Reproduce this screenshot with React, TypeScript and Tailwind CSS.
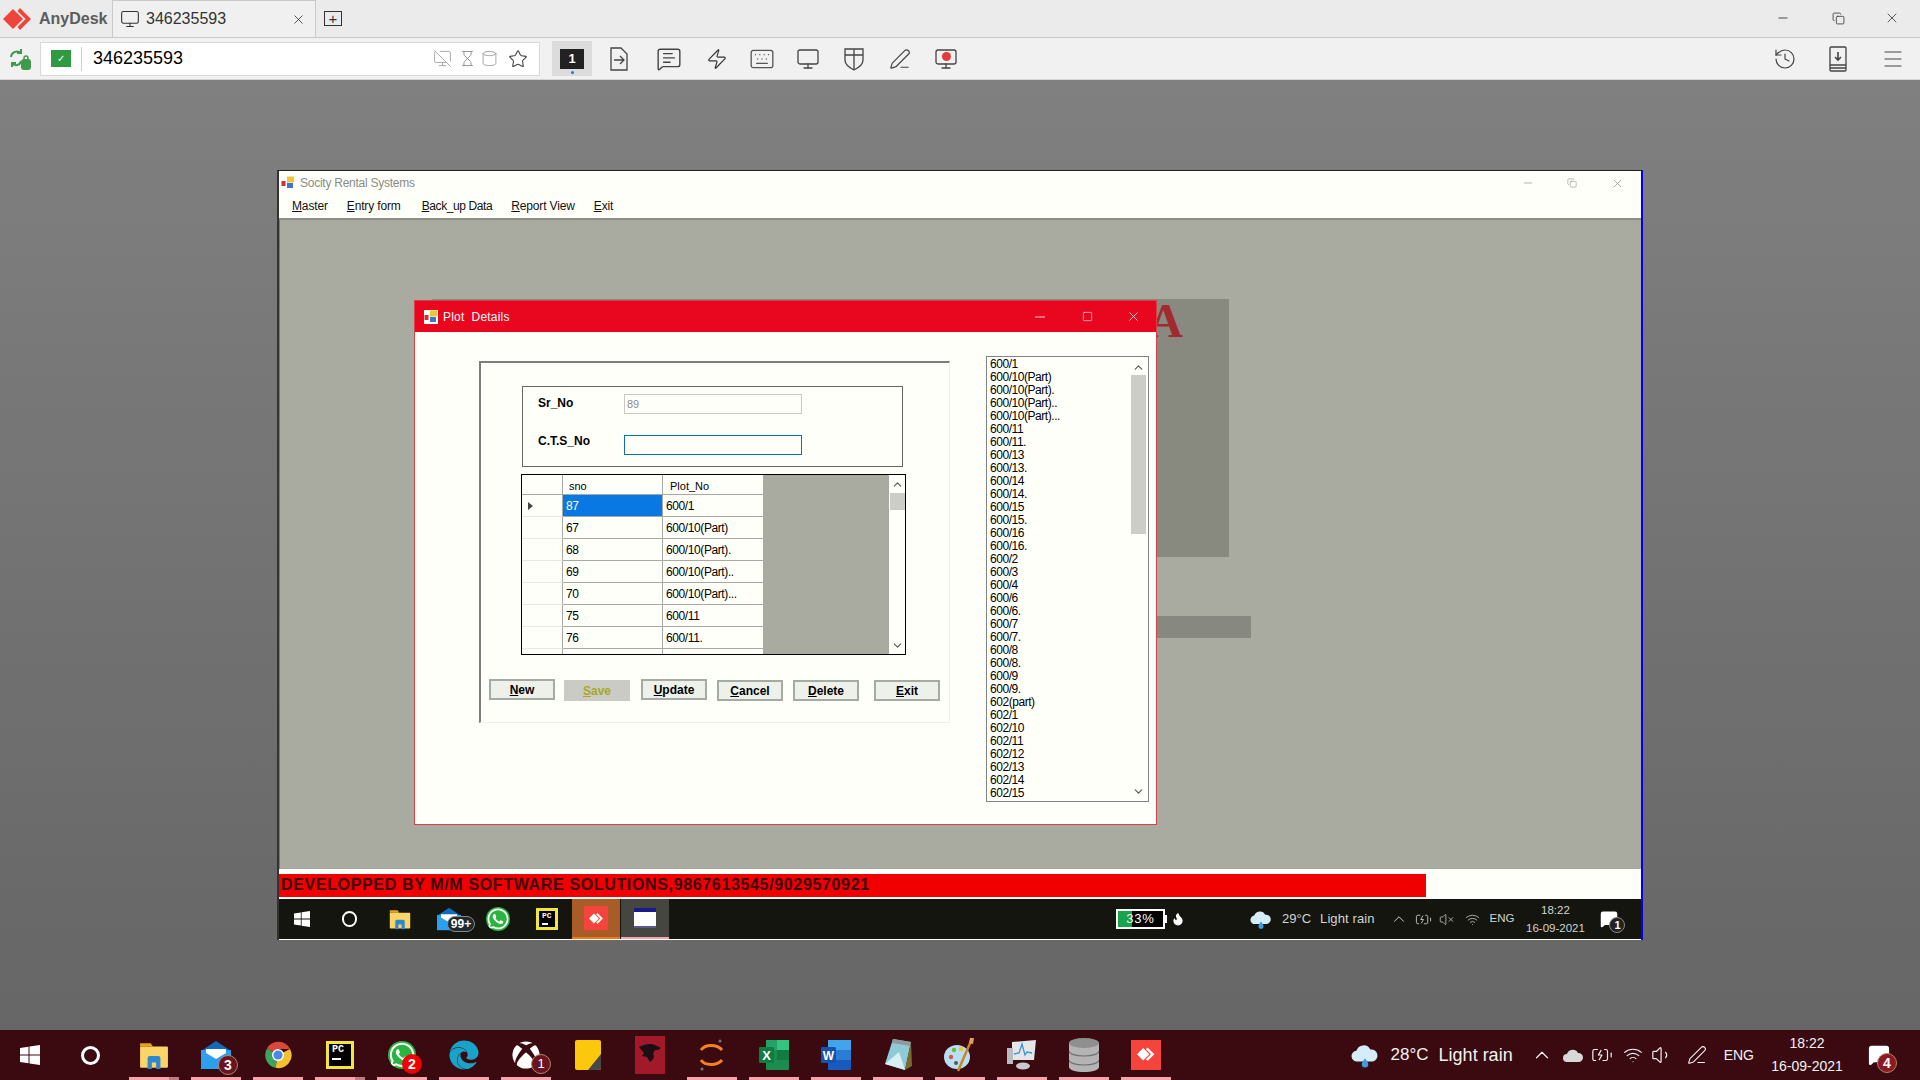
import { ReactNode } from 'react';
import {
  ChevronDown,
  ChevronUp,
  Copy,
  Cylinder,
  History,
  Hourglass,
  Keyboard,
  Menu,
  MessageSquareText,
  Minus,
  Monitor,
  MonitorOff,
  PenLine,
  Square,
  Star,
  VolumeX,
  Volume1,
  Wifi,
  BatteryCharging,
  Flame,
  X,
  Zap,
} from 'lucide-react';
import { FaEdge, FaWhatsapp, FaXbox } from 'react-icons/fa';

const rows = [
  ['87', '600/1'],
  ['67', '600/10(Part)'],
  ['68', '600/10(Part).'],
  ['69', '600/10(Part)..'],
  ['70', '600/10(Part)...'],
  ['75', '600/11'],
  ['76', '600/11.'],
];

const listItems = [
  '600/1', '600/10(Part)', '600/10(Part).', '600/10(Part)..', '600/10(Part)...', '600/11', '600/11.',
  '600/13', '600/13.', '600/14', '600/14.', '600/15', '600/15.', '600/16', '600/16.', '600/2', '600/3',
  '600/4', '600/6', '600/6.', '600/7', '600/7.', '600/8', '600/8.', '600/9', '600/9.', '602(part)',
  '602/1', '602/10', '602/11', '602/12', '602/13', '602/14', '602/15',
];

function AnyDeskMark({ size = 30, color = '#ef443b' }: { size?: number; color?: string }) {
  return (
    <svg width={size} height={size} viewBox="0 0 30 30">
      <path d="M10 5 20 15 10 25 0 15Z" fill={color} />
      <path d="M17 4 28 15 17 26 14.500 23 22.500 15 14.500 7Z" fill={color} />
    </svg>
  );
}

function AnyDeskTile({ size }: { size: number }) {
  return (
    <div className="flex items-center justify-center bg-[#f4443b]" style={{ width: size, height: size }}>
      <AnyDeskMark size={size * 0.62} color="#ffffff" />
    </div>
  );
}

function WinLogo({ size }: { size: number }) {
  return (
    <svg width={size} height={size} viewBox="0 0 20 20" fill="#ffffff">
      <path d="M0 3 8.500 1.800V9.500H0ZM9.500 1.600 20 0V9.500H9.500ZM0 10.500H8.500V18.200L0 17ZM9.500 10.500H20V20L9.500 18.400Z" />
    </svg>
  );
}

function FolderIcon({ size }: { size: number }) {
  return (
    <svg width={size} height={size} viewBox="0 0 28 28">
      <path d="M1 3h10l2 3H1Z" fill="#e8a317" />
      <rect x="1" y="6" width="26" height="20" rx="1" fill="#fbd467" />
      <path d="M8 27V17a2 2 0 0 1 2-2h8a2 2 0 0 1 2 2v10h-4v-6h-4v6Z" fill="#2f87d0" />
    </svg>
  );
}

function MailIcon({ size }: { size: number }) {
  return (
    <svg width={size} height={size} viewBox="0 0 30 30">
      <path d="M15 1 30 11H0Z" fill="#0f6cbd" />
      <rect x="0" y="10" width="30" height="19" fill="#2aa0ee" />
      <path d="M5 9h20v4l-10 6-10-6Z" fill="#ffffff" />
    </svg>
  );
}

function ChromeIcon({ size }: { size: number }) {
  return (
    <svg width={size} height={size} viewBox="0 0 28 28">
      <path d="M14 14 3 7.500A13 13 0 0 1 26 8H14Z" fill="#d9483b" />
      <path d="M14 14 3 7.500A13 13 0 0 0 11.500 26.800Z" fill="#3ba55c" />
      <path d="M14 14 26 8A13 13 0 0 1 11.500 26.800Z" fill="#f2c12e" />
      <circle cx="14" cy="14" r="6" fill="#ffffff" />
      <circle cx="14" cy="14" r="4.600" fill="#4f86ec" />
    </svg>
  );
}

function PyCharmIcon({ size }: { size: number }) {
  return (
    <div className="flex flex-col bg-black border-[3px] border-[#f0e63c] pl-[3px] pt-[1px] leading-none text-white font-bold font-['Liberation_Mono',monospace]" style={{ width: size, height: size, fontSize: size * 0.36 }}>
      <span>PC</span>
      <span className="mt-[3px] h-[2px] w-[45%] bg-white" />
    </div>
  );
}

function ExcelIcon() {
  return (
    <svg width="30" height="32" viewBox="0 0 30 32">
      <rect x="7" y="1" width="23" height="30" rx="1" fill="#1d8a50" />
      <rect x="18" y="1" width="12" height="10" fill="#33c481" />
      <rect x="7" y="1" width="11" height="10" fill="#21a366" />
      <rect x="18" y="11" width="12" height="10" fill="#107c41" />
      <rect x="0" y="8" width="15" height="16" rx="1" fill="#107c41" />
      <text x="7.500" y="20.500" fontSize="13" fontWeight="700" fill="#ffffff" textAnchor="middle" fontFamily="Liberation Sans">X</text>
    </svg>
  );
}

function WordIcon() {
  return (
    <svg width="30" height="32" viewBox="0 0 30 32">
      <rect x="7" y="1" width="23" height="30" rx="1" fill="#185abd" />
      <rect x="7" y="1" width="23" height="10" fill="#41a5ee" />
      <rect x="7" y="11" width="23" height="10" fill="#2b7cd3" />
      <rect x="0" y="8" width="15" height="16" rx="1" fill="#1552ad" />
      <text x="7.500" y="20.500" fontSize="12" fontWeight="700" fill="#ffffff" textAnchor="middle" fontFamily="Liberation Sans">W</text>
    </svg>
  );
}

function StickyIcon() {
  return (
    <svg width="28" height="32" viewBox="0 0 26 32">
      <rect x="0" y="1" width="26" height="30" rx="2" fill="#fdc80b" />
      <path d="M26 15V29a2 2 0 0 1-2 2H13Z" fill="#48484a" />
    </svg>
  );
}

function DragonIcon() {
  return (
    <svg width="30" height="38" viewBox="0 0 30 38">
      <rect width="30" height="38" fill="#a3192c" />
      <path d="M4 11c6-3 12-4 16-2l6 3-3 2-3 0-2 4c2 3 0 6-3 8l-3-5-5-1 2-3-5-6Z" fill="#1b0f14" />
    </svg>
  );
}

function EclipseIcon() {
  return (
    <svg width="26" height="34" viewBox="0 0 26 34" fill="none">
      <path d="M2 12C6 6 18 6 23 12" stroke="#f58220" strokeWidth="3" />
      <path d="M2 22C6 28 18 28 23 22" stroke="#f58220" strokeWidth="3" />
      <circle cx="21" cy="3" r="1.500" fill="#777" />
      <circle cx="3" cy="31" r="1.500" fill="#777" />
    </svg>
  );
}

function NotepadIcon() {
  return (
    <svg width="30" height="34" viewBox="0 0 30 34">
      <path d="M10 1 28 4 22 32 2 26Z" fill="#8ecbd8" />
      <path d="M10 1 28 4 27 8 9 5Z" fill="#8d9aa0" />
      <path d="M16 14 22 32 2 26Z" fill="#d8eef2" />
      <path d="M28 4 29 28 22 32Z" fill="#7a6a2c" />
    </svg>
  );
}

function PaintIcon() {
  return (
    <svg width="32" height="36" viewBox="0 0 32 36">
      <ellipse cx="13" cy="20" rx="13" ry="12" fill="#b8dff2" />
      <circle cx="7" cy="20" r="2.200" fill="#d9534f" />
      <circle cx="10" cy="13" r="2.200" fill="#6cbb3c" />
      <circle cx="17" cy="12" r="2.200" fill="#f2c12e" />
      <circle cx="12" cy="26" r="2" fill="#555" />
      <path d="M27 4 14 34" stroke="#c98528" strokeWidth="2.500" />
      <path d="M26 1h4l-1 6-4-1Z" fill="#d9a55a" />
    </svg>
  );
}

function PerfIcon() {
  return (
    <svg width="30" height="32" viewBox="0 0 30 32">
      <path d="M5 3 29 1 27 21 5 21Z" fill="#e4e6e8" />
      <path d="M7 15l5-1 3-9 3 11 2-3 5 1" fill="none" stroke="#3f93d2" strokeWidth="1.300" />
      <rect x="0" y="9" width="6" height="16" fill="#b9bcbf" />
      <ellipse cx="16" cy="27" rx="7" ry="3.500" fill="#c8cacc" />
    </svg>
  );
}

function DatabaseIcon() {
  return (
    <svg width="30" height="34" viewBox="0 0 30 34">
      <path d="M0 5v24c0 3 7 5 15 5s15-2 15-5V5Z" fill="#b4b4b4" />
      <ellipse cx="15" cy="5" rx="15" ry="5" fill="#8f8f8f" />
      <path d="M0 13c0 3 7 5 15 5s15-2 15-5" fill="none" stroke="#6f6f6f" strokeWidth="1.200" />
      <path d="M0 22c0 3 7 5 15 5s15-2 15-5" fill="none" stroke="#6f6f6f" strokeWidth="1.200" />
    </svg>
  );
}

function CloudRain({ size }: { size: number }) {
  return (
    <svg width={size} height={size} viewBox="0 0 26 26">
      <path d="M6 19a5 5 0 0 1-1-10 7 7 0 0 1 13-1 5.500 5.500 0 0 1 2 11Z" fill="#d5ecf9" />
      <path d="M13 16c2 3 3 4 3 5.500a3 3 0 0 1-6 0c0-1.500 1-2.500 3-5.500Z" fill="#3f9be0" />
    </svg>
  );
}

// toolbar glyphs that lucide has no close match for
function SyncLockIcon() {
  return (
    <svg width="22" height="24" viewBox="0 0 22 24" fill="none" stroke="#3f9b4c" strokeWidth="2">
      <path d="M2 10a6 6 0 0 1 10-4" />
      <path d="M12 2v4H8" />
      <path d="M12 14a5 5 0 0 1-9 2" />
      <path d="M3 20v-4h4" />
      <rect x="13" y="13" width="8" height="9" rx="2" fill="#3f9b4c" />
      <path d="M15 13v-2a2 2 0 0 1 4 0v2" strokeWidth="1.500" />
    </svg>
  );
}

function SessionArrowIcon() {
  return (
    <svg width="20" height="24" viewBox="0 0 20 24" fill="none" stroke="#444" strokeWidth="1.300">
      <path d="M2 1h10l6 6v16H2Z" />
      <path d="M5 13h10M11 9l4 4-4 4" />
    </svg>
  );
}

function ShieldCrossIcon() {
  return (
    <svg width="20" height="24" viewBox="0 0 20 24" fill="none" stroke="#444" strokeWidth="1.300">
      <path d="M1 2h18v11c0 4-5 8-9 10-4-2-9-6-9-10Z" />
      <path d="M1 8h18M10 2v21" />
    </svg>
  );
}

function SaveToIcon() {
  return (
    <svg width="20" height="26" viewBox="0 0 20 26" fill="none" stroke="#444" strokeWidth="1.300">
      <rect x="2" y="1" width="16" height="24" rx="1" />
      <path d="M2 19h16M2 22h16" />
      <path d="M10 6v8M7 11l3 3 3-3" strokeWidth="1.600" />
    </svg>
  );
}

function Badge({ children, className }: { children: ReactNode; className: string }) {
  return (
    <span className={`absolute flex items-center justify-center rounded-full text-white font-['Liberation_Sans',sans-serif] ${className}`}>
      {children}
    </span>
  );
}

function BottomSlot({ children, underline = true, stacked = false }: { children: ReactNode; underline?: boolean; stacked?: boolean }) {
  return (
    <div className="relative flex h-full w-[50px] items-center justify-center pb-[1px]">
      {children}
      {underline && <span className="absolute bottom-0 left-0 right-0 h-[3px] bg-[#f8a3ab]" />}
      {stacked && <span className="absolute bottom-0 right-0 h-[3px] w-[10px] bg-[#c27a82]" />}
    </div>
  );
}

function DialogButton({ label, className = '', off = false }: { label: string; className?: string; off?: boolean }) {
  return (
    <button className={`h-[21px] w-[66px] border-2 text-[12px] font-bold leading-none ${off ? 'border-[#c9cbc4] bg-[#c9cbc4] text-[#a8a820]' : 'border-[#a6aaa4] bg-[#eef0ea] text-black'} ${className}`}>
      <u>{label[0]}</u>
      {label.slice(1)}
    </button>
  );
}

function TopBar() {
  return (
    <div className="flex h-[38px] border-b border-[#c9c9c9] bg-[#ebebeb]">
      <div className="flex w-[112px] items-center pl-[3px]">
        <AnyDeskMark size={30} />
        <span className="ml-[6px] text-[16px] font-bold text-[#5c5c5c]">AnyDesk</span>
      </div>
      <div className="flex h-[37px] w-[204px] items-center self-end border-x border-t border-[#c9c9c9] bg-[#f0f0f0] pl-[7px]">
        <Monitor size={20} strokeWidth={1.300} className="text-[#333]" />
        <span className="ml-[6px] text-[16px] text-[#333]">346235593</span>
        <X size={15} strokeWidth={1.200} className="ml-[65px] text-[#222]" />
      </div>
      <div className="ml-[8px] flex h-full items-center">
        <div className="relative flex h-[15px] w-[18px] items-center justify-center border border-[#333] text-[15px] leading-none text-[#333]">+</div>
      </div>
      <div className="ml-auto flex items-center pb-[1px] text-[#333]">
        <Minus size={14} strokeWidth={1.500} />
        <Copy size={13} strokeWidth={1.500} className="ml-[42px]" />
        <X size={16} strokeWidth={1.200} className="ml-[39px] mr-[20px]" />
      </div>
    </div>
  );
}

function ToolBar() {
  return (
    <div className="flex h-[42px] items-center border-b border-[#d5d5d5] bg-[#f1f1f1]">
      <div className="ml-[9px] flex w-[22px]"><SyncLockIcon /></div>
      <div className="ml-[9px] flex h-[34px] w-[500px] items-center border border-[#d8d8d8] bg-white">
        <div className="ml-[10px] flex h-[17px] w-[20px] items-center justify-center bg-[#2f9a3f] text-[10px] text-white">✓</div>
        <span className="ml-[10px] h-[24px] w-px bg-[#cfcfcf]" />
        <span className="ml-[11px] text-[18px] text-black">346235593</span>
        <div className="ml-auto mr-[11px] flex items-center">
          <MonitorOff size={19} strokeWidth={1.200} className="text-[#a6a6a6]" />
          <Hourglass size={17} strokeWidth={1.300} className="ml-[7px] text-[#8a8a8a]" />
          <Cylinder size={17} strokeWidth={1.200} className="ml-[5px] text-[#9a9a9a]" />
          <Star size={20} strokeWidth={1.300} className="ml-[10px] text-[#444]" />
        </div>
      </div>
      <div className="relative ml-[12px] flex h-[35px] w-[40px] items-center justify-center bg-[#dcdcdc]">
        <span className="flex h-[20px] w-[24px] items-center justify-center bg-[#222] text-[13px] font-bold text-white">1</span>
        <span className="absolute bottom-[2px] left-[19px] h-[3px] w-[3px] rounded-full bg-[#2a6fdc]" />
      </div>
      <div className="ml-[17px] flex"><SessionArrowIcon /></div>
      <MessageSquareText size={26} strokeWidth={1.300} className="ml-[27px] text-[#444]" />
      <Zap size={22} strokeWidth={1.300} className="ml-[24px] text-[#333]" />
      <Keyboard size={26} strokeWidth={1.200} className="ml-[21px] text-[#555]" />
      <Monitor size={24} strokeWidth={1.300} className="ml-[21px] text-[#444]" />
      <div className="ml-[24px] flex"><ShieldCrossIcon /></div>
      <PenLine size={22} strokeWidth={1.300} className="ml-[25px] text-[#444]" />
      <div className="relative ml-[23px] flex items-center justify-center">
        <Monitor size={24} strokeWidth={1.300} className="text-[#444]" />
        <span className="absolute top-[5px] h-[9px] w-[9px] rounded-full bg-[#e23b3b]" />
      </div>
      <div className="ml-auto flex items-center text-[#444]">
        <History size={24} strokeWidth={1.200} />
        <div className="ml-[31px] flex"><SaveToIcon /></div>
        <Menu size={24} strokeWidth={1.200} className="ml-[33px] mr-[15px]" />
      </div>
    </div>
  );
}

function PlotDialog() {
  return (
    <div className="absolute left-[134px] top-[80px] flex h-[525px] w-[743px] flex-col border border-[#d8404a] bg-[#fffffa] text-black">
      <div className="flex h-[31px] items-center bg-[#e9071f] pl-[9px] text-white">
        <FormIcon />
        <span className="ml-[5px] text-[12px] tracking-[0.2px]">Plot&nbsp; Details</span>
        <div className="ml-auto flex items-center">
          <Minus size={16} strokeWidth={1.200} />
          <Square size={11} strokeWidth={1.300} className="ml-[34px]" />
          <X size={15} strokeWidth={1.300} className="ml-[33px] mr-[15px]" />
        </div>
      </div>
      <div className="flex flex-1 items-start">
        <div className="ml-[64px] mt-[29px] h-[362px] w-[471px] border-b border-l-2 border-r border-t-2 border-b-[#eeeeea] border-l-[#7d7d7d] border-r-[#f0f0ec] border-t-[#7d7d7d]">
          <div className="ml-[41px] mt-[23px] h-[81px] w-[381px] border border-[#666666] pl-[15px] pt-[7px]">
            <div className="flex h-[20px] items-center">
              <span className="mt-[-2px] w-[86px] text-[12px] font-bold">Sr_No</span>
              <div className="flex h-[20px] w-[178px] items-center border border-[#c9c9c5] pl-[2px] text-[11px] text-[#8c8c8c]">89</div>
            </div>
            <div className="mt-[21px] flex items-start">
              <span className="mt-[-3px] w-[86px] text-[12px] font-bold">C.T.S_No</span>
              <div className="h-[20px] w-[178px] border border-[#0f6fb4]" />
            </div>
          </div>
          <div className="ml-[40px] mt-[7px] flex h-[181px] w-[385px] border border-black">
            <div className="w-[241px] overflow-hidden text-[12px] tracking-[-0.4px]">
              <div className="flex h-[20px] leading-[22px]">
                <div className="w-[41px] border-b border-r border-[#a8a8a4]" />
                <div className="w-[100px] border-b border-r border-[#a8a8a4] pl-[6px] text-[11px] tracking-normal">sno</div>
                <div className="w-[100px] border-b border-[#a8a8a4] pl-[7px] text-[11px] tracking-normal">Plot_No</div>
              </div>
              {rows.map((r, i) => (
                <div key={r[0]} className="flex h-[22px] leading-[23px]">
                  <div className="flex w-[41px] items-center border-b border-r border-b-[#e8e8e4] border-r-[#a8a8a4] pl-[6px]">
                    {i === 0 && <span className="h-0 w-0 border-y-[4px] border-l-[5px] border-y-transparent border-l-[#444]" />}
                  </div>
                  <div className={`w-[100px] border-b border-r border-[#a8a8a4] pl-[3px] ${i === 0 ? 'bg-[#0a78e2] text-white' : ''}`}>{r[0]}</div>
                  <div className="w-[100px] border-b border-[#a8a8a4] pl-[3px]">{r[1]}</div>
                </div>
              ))}
              <div className="flex h-[5px]">
                <div className="w-[41px] border-r border-[#a8a8a4]" />
                <div className="w-[100px] border-r border-[#a8a8a4]" />
              </div>
            </div>
            <div className="w-[126px] bg-[#a9aba1]" />
            <div className="flex w-[16px] flex-col items-center bg-[#fffffa]">
              <ChevronUp size={13} strokeWidth={2} className="mt-[3px] text-[#555]" />
              <div className="mt-[2px] h-[17px] w-[15px] bg-[#cbcdc6]" />
              <ChevronDown size={13} strokeWidth={2} className="mt-auto mb-[2px] text-[#555]" />
            </div>
          </div>
          <div className="ml-[8px] mt-[24px] flex items-start">
            <DialogButton label="New" />
            <DialogButton label="Save" off className="ml-[9px] mt-px" />
            <DialogButton label="Update" className="ml-[11px]" />
            <DialogButton label="Cancel" className="ml-[10px] mt-px" />
            <DialogButton label="Delete" className="ml-[10px] mt-px" />
            <DialogButton label="Exit" className="ml-[15px] mt-px" />
          </div>
        </div>
        <div className="ml-[36px] mt-[24px] flex h-[446px] w-[163px] border border-[#7f8486] pl-[3px]">
          <div className="flex-1 overflow-hidden pt-[1px] text-[12px] leading-[13px] tracking-[-0.45px]">
            {listItems.map((item) => (
              <div key={item}>{item}</div>
            ))}
          </div>
          <div className="mr-[2px] flex w-[15px] flex-col items-center">
            <ChevronUp size={13} strokeWidth={2} className="mt-[4px] text-[#555]" />
            <div className="mt-px h-[159px] w-[15px] bg-[#cbcdc6]" />
            <ChevronDown size={13} strokeWidth={2} className="mt-auto mb-[3px] text-[#555]" />
          </div>
        </div>
      </div>
    </div>
  );
}

function FormIcon() {
  return (
    <svg width="14" height="14" viewBox="0 0 14 14">
      <rect width="14" height="14" fill="#ffffff" />
      <rect x="6" y="0.500" width="7" height="6" fill="#f3c531" />
      <rect x="0.500" y="5" width="4" height="5" fill="#c9352d" />
      <rect x="6" y="7" width="6" height="5" fill="#3f74d6" />
    </svg>
  );
}

function RemoteTaskbar() {
  return (
    <div className="flex h-[40px] items-center bg-[#13150e] pr-[4px] text-[#d4d4d0]">
      <div className="flex w-[46px] justify-center"><WinLogo size={16} /></div>
      <div className="flex w-[48px] justify-center">
        <span className="h-[16px] w-[15px] rounded-full border-2 border-white" />
      </div>
      <div className="flex w-[54px] justify-center"><FolderIcon size={22} /></div>
      <div className="relative flex w-[44px] justify-center">
        <MailIcon size={24} />
        <Badge className="left-[20px] top-[9px] h-[16px] w-[28px] border border-[#888] bg-[#1d2a30] text-[12px] font-bold">99+</Badge>
      </div>
      <div className="flex w-[54px] justify-center"><FaWhatsapp size={24} color="#ffffff" className="rounded-full bg-[#2ab540]" /></div>
      <div className="flex w-[44px] justify-center"><PyCharmIcon size={22} /></div>
      <div className="ml-[3px] flex h-full w-[48px] items-center justify-center border-b-[2px] border-[#f07a12] bg-[#a85c28]"><AnyDeskTile size={24} /></div>
      <div className="ml-px flex h-full w-[48px] items-center justify-center border-b-[2px] border-[#f8a3ab] bg-[#454640]">
        <div className="h-[20px] w-[22px] border-t-[4px] border-b-[2px] border-t-[#1a1a8c] border-b-[#5a5a90] bg-white" />
      </div>
      <div className="ml-[447px] flex h-[20px] w-[49px] items-center border-2 border-white bg-black">
        <div className="flex h-full w-full items-center justify-center bg-[linear-gradient(90deg,#16a34a_32%,#000_32%)] text-[13px] tracking-[0.8px] text-white">33%</div>
      </div>
      <span className="h-[8px] w-[2px] bg-white" />
      <Flame size={14} className="ml-[4px] fill-white text-white" />
      <div className="ml-[65px]"><CloudRain size={22} /></div>
      <span className="ml-[10px] text-[13px]">29°C</span>
      <span className="ml-[9px] text-[13px] tracking-[0.1px]">Light rain</span>
      <ChevronUp size={18} strokeWidth={1.300} className="ml-[15px]" />
      <BatteryCharging size={17} strokeWidth={1.200} className="ml-[7px]" />
      <VolumeX size={15} strokeWidth={1.200} className="ml-[7px]" />
      <Wifi size={15} strokeWidth={1.200} className="ml-[11px]" />
      <span className="ml-[10px] text-[11.500px]">ENG</span>
      <div className="ml-[11px] flex w-[60px] flex-col items-center whitespace-nowrap text-[11.500px] leading-[18px]">
        <span>18:22</span>
        <span>16-09-2021</span>
      </div>
      <div className="relative ml-[15px] flex w-[20px]">
        <MessageSquareText size={18} className="fill-white text-white" />
        <Badge className="left-[9px] top-[7px] h-[16px] w-[16px] border border-[#888] bg-[#222] text-[11px] font-bold">1</Badge>
      </div>
    </div>
  );
}

function RemoteWindow() {
  return (
    <div className="flex h-[770px] w-[1366px] flex-col border-l-2 border-r-2 border-t border-l-[#333] border-r-[#0000ee] border-t-[#222] bg-[#fffffa]">
      <div className="flex h-[24px] items-center pl-[2px] text-[#8b8b86]">
        <FormIcon />
        <span className="ml-[5px] text-[12px] tracking-[-0.25px]">Socity Rental Systems</span>
        <div className="ml-auto flex items-center text-[#7c7c78]">
          <Minus size={12} strokeWidth={1.200} />
          <Copy size={10} strokeWidth={1.200} className="ml-[33px]" />
          <X size={13} strokeWidth={1.200} className="ml-[34px] mr-[17px]" />
        </div>
      </div>
      <div className="flex h-[25px] items-center border-b-2 border-[#8e8f88] pb-[2px] pl-[13px] text-[12px] tracking-[-0.15px] text-[#111]">
        <span><u>M</u>aster</span>
        <span className="ml-[19px]"><u>E</u>ntry form</span>
        <span className="ml-[21px] tracking-[-0.4px]"><u>B</u>ack_up Data</span>
        <span className="ml-[19px]"><u>R</u>eport View</span>
        <span className="ml-[19px]"><u>E</u>xit</span>
      </div>
      <div className="relative h-[649px] overflow-hidden border-l border-[#777] bg-[#a9aba1]">
        <div className="absolute left-[152px] top-[79px] flex h-[258px] w-[797px] justify-end bg-[#888a80] pr-[46px]">
          <span className="mt-[-3px] h-[50px] text-[48px] font-bold leading-[50px] text-[#a12a2e] font-['Liberation_Serif',serif]">A</span>
        </div>
        <div className="absolute left-[500px] top-[396px] h-[22px] w-[471px] bg-[#878980]" />
        <PlotDialog />
      </div>
      <div className="flex h-[30px] flex-col border-b-2 border-white pt-[5px]">
        <div className="flex h-[23px] w-[1147px] items-center bg-[#f00000] pb-[1px] pl-[2px] text-[16px] font-bold tracking-[0.65px] text-[#3a0608]">
          DEVELOPPED BY M/M SOFTWARE SOLUTIONS,9867613545/9029570921
        </div>
      </div>
      <RemoteTaskbar />
    </div>
  );
}

function BottomTaskbar() {
  return (
    <div className="flex h-[50px] items-center bg-[#3a0a10] text-[#f2f2f2]">
      <div className="flex w-[60px] justify-center"><WinLogo size={20} /></div>
      <div className="flex w-[60px] justify-center">
        <span className="h-[19px] w-[19px] rounded-full border-[3px] border-white" />
      </div>
      <div className="ml-[9px] flex h-full gap-[12px]">
        <BottomSlot stacked><FolderIcon size={30} /></BottomSlot>
        <BottomSlot>
          <MailIcon size={30} />
          <Badge className="left-[27px] top-[25px] h-[20px] w-[20px] border border-[#a86] bg-[#6b1420] text-[14px] font-bold">3</Badge>
        </BottomSlot>
        <BottomSlot><ChromeIcon size={28} /></BottomSlot>
        <BottomSlot stacked><PyCharmIcon size={28} /></BottomSlot>
        <BottomSlot>
          <FaWhatsapp size={28} color="#ffffff" className="rounded-full bg-[#2ab540]" />
          <Badge className="left-[25px] top-[24px] h-[20px] w-[20px] bg-[#f00000] text-[14px] font-bold">2</Badge>
        </BottomSlot>
        <BottomSlot><FaEdge size={30} color="#1aa3c9" /></BottomSlot>
        <BottomSlot>
          <FaXbox size={28} color="#ffffff" />
          <Badge className="left-[30px] top-[24px] h-[20px] w-[20px] border border-[#a86] bg-[#6b1420] text-[13px]">1</Badge>
        </BottomSlot>
        <BottomSlot underline={false}><StickyIcon /></BottomSlot>
        <BottomSlot underline={false}><DragonIcon /></BottomSlot>
        <BottomSlot><EclipseIcon /></BottomSlot>
        <BottomSlot><ExcelIcon /></BottomSlot>
        <BottomSlot><WordIcon /></BottomSlot>
        <BottomSlot><NotepadIcon /></BottomSlot>
        <BottomSlot><PaintIcon /></BottomSlot>
        <BottomSlot><PerfIcon /></BottomSlot>
        <BottomSlot><DatabaseIcon /></BottomSlot>
        <BottomSlot><AnyDeskTile size={30} /></BottomSlot>
      </div>
      <div className="ml-auto flex items-center">
        <CloudRain size={28} />
        <span className="ml-[12px] text-[17px]">28°C</span>
        <span className="ml-[10px] text-[18px]">Light rain</span>
        <ChevronUp size={22} strokeWidth={1.300} className="ml-[18px]" />
        <svg width="22" height="14" viewBox="0 0 22 14" className="ml-[9px]"><path d="M5 14a4 4 0 0 1 0-8 6 6 0 0 1 11-1 4.500 4.500 0 0 1 1 9Z" fill="#d8d8d8" /></svg>
        <BatteryCharging size={22} strokeWidth={1.300} className="ml-[7px]" />
        <Wifi size={20} strokeWidth={1.300} className="ml-[10px]" />
        <Volume1 size={22} strokeWidth={1.300} className="ml-[8px]" />
        <PenLine size={20} strokeWidth={1.300} className="ml-[14px]" />
        <span className="ml-[17px] text-[14px]">ENG</span>
        <div className="ml-[16px] flex w-[74px] flex-col items-center text-[14px] leading-[23px]">
          <span>18:22</span>
          <span>16-09-2021</span>
        </div>
        <div className="relative ml-[24px] mr-[28px] flex w-[24px]">
          <MessageSquareText size={22} className="fill-white text-white" />
          <Badge className="left-[9px] top-[9px] h-[20px] w-[20px] border border-[#a86] bg-[#8c1822] text-[14px] font-bold">4</Badge>
        </div>
      </div>
    </div>
  );
}

export default function App() {
  return (
    <div className="flex h-[1080px] w-[1920px] flex-col overflow-hidden font-['Liberation_Sans',sans-serif]">
      <TopBar />
      <ToolBar />
      <div className="h-[950px] bg-gradient-to-b from-[#808080] to-[#666666] pl-[277px] pt-[90px]">
        <RemoteWindow />
      </div>
      <BottomTaskbar />
    </div>
  );
}
